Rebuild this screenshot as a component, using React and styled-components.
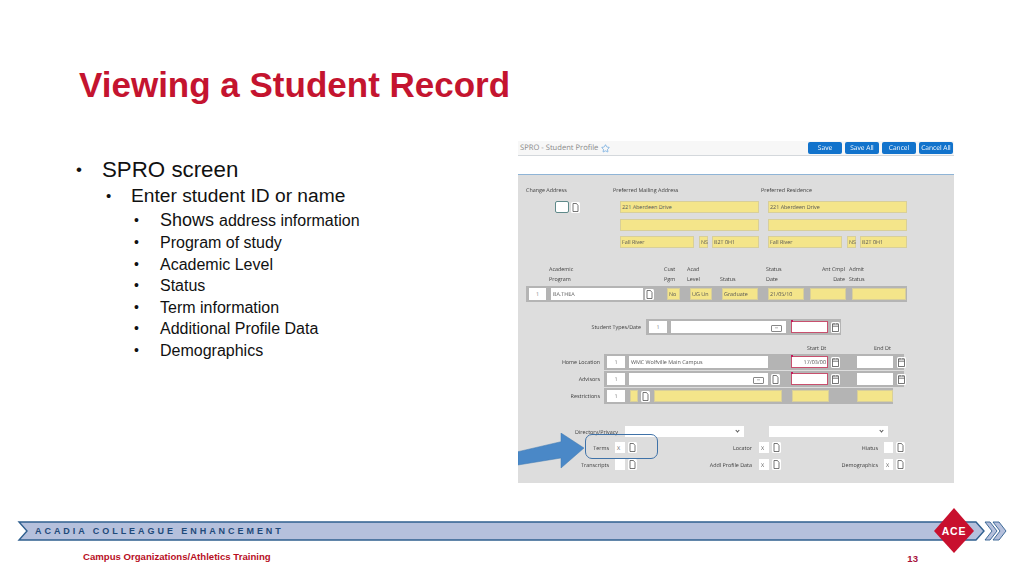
import styled, { createGlobalStyle } from 'styled-components';
import { Star } from 'lucide-react';

const BULLETS = [
  'Program of study',
  'Academic Level',
  'Status',
  'Term information',
  'Additional Profile Data',
  'Demographics',
];

export default function App() {
  return (
    <Slide>
      <GlobalStyle />
      <Title>Viewing a Student Record</Title>

      <Body>
        <BulletList>
          <BulletOne>SPRO screen</BulletOne>
          <BulletTwo>Enter student ID or name</BulletTwo>
          <BulletThree $first>
            Shows <Smaller>address information</Smaller>
          </BulletThree>
          {BULLETS.map((text) => (
            <BulletThree key={text}>{text}</BulletThree>
          ))}
        </BulletList>

        <Shot>
          <Blurred>
            <ShotHeader>
              <ShotTitle>
                SPRO - Student Profile
                <Star size={9} color="#3f8fd8" strokeWidth={1.5} />
              </ShotTitle>
              <ShotActions>
                <ShotBtn>Save</ShotBtn>
                <ShotBtn>Save All</ShotBtn>
                <ShotBtn>Cancel</ShotBtn>
                <ShotBtn>Cancel All</ShotBtn>
              </ShotActions>
            </ShotHeader>

            <Form>
              <LabelRow $pl={8} $h={8} $mt={11}>
                <Label $w={87}>Change Address</Label>
                <Label $w={148}>Preferred Mailing Address</Label>
                <Label>Preferred Residence</Label>
              </LabelRow>

              <Row $mt={7} $pl={37}>
                <CheckBox />
                <DocIcon $ml={2} />
                <Input $w={139} $ml={40} $fill="yellow">221 Aberdeen Drive</Input>
                <Input $w={139} $ml={9} $fill="yellow">221 Aberdeen Drive</Input>
              </Row>
              <Row $mt={6} $pl={102}>
                <Input $w={139} $fill="yellow" />
                <Input $w={139} $ml={9} $fill="yellow" />
              </Row>
              <Row $mt={5} $pl={102}>
                <Input $w={74} $fill="yellow">Fall River</Input>
                <Input $w={9} $ml={5} $fill="yellow">NS</Input>
                <Input $w={47} $ml={4} $fill="yellow">B2T 0H1</Input>
                <Input $w={74} $ml={9} $fill="yellow">Fall River</Input>
                <Input $w={9} $ml={5} $fill="yellow">NS</Input>
                <Input $w={47} $ml={4} $fill="yellow">B2T 0H1</Input>
              </Row>

              <LabelRow $mt={16} $pl={31} $h={20}>
                <StackLabel $w={115}>Academic<br />Program</StackLabel>
                <StackLabel $w={23}>Cust<br />Pgm</StackLabel>
                <StackLabel $w={33}>Acad<br />Level</StackLabel>
                <StackLabel $w={46}><br />Status</StackLabel>
                <StackLabel $w={44}>Status<br />Date</StackLabel>
                <StackLabel $w={35} $right>Ant Cmpl<br />Date</StackLabel>
                <StackLabel $w={30} $ml={4}>Admit<br />Status</StackLabel>
              </LabelRow>

              <Band $mt={2} $ml={8} $w={381}>
                <IndexBox $w={17}>1</IndexBox>
                <Input $w={92} $ml={5}>BA.THEA</Input>
                <DocIcon $ml={2} />
                <Input $w={13} $ml={13} $fill="yellow">No</Input>
                <Input $w={22} $ml={10} $fill="yellow">UG Un</Input>
                <Input $w={36} $ml={10} $fill="yellow">Graduate</Input>
                <Input $w={36} $ml={10} $fill="yellow">21/05/10</Input>
                <Input $w={36} $ml={6} $fill="yellow" />
                <Input $w={54} $ml={6} $fill="yellow" />
              </Band>

              <Row $mt={17}>
                <RowLabel $w={123}>Student Types/Date</RowLabel>
                <Band $ml={5} $w={195}>
                  <IndexBox $w={18}>1</IndexBox>
                  <Input $w={115} $ml={4}><Dots /></Input>
                  <Input $w={37} $ml={5} $fill="required" />
                  <CalIcon $ml={3} />
                </Band>
              </Row>

              <LabelRow $mt={9} $h={8} $pl={289}>
                <Label $w={67}>Start Dt</Label>
                <Label>End Dt</Label>
              </LabelRow>

              <Row $mt={2}>
                <RowLabel $w={82}>Home Location</RowLabel>
                <Band $ml={4} $w={300}>
                  <IndexBox $w={18}>1</IndexBox>
                  <Input $w={139} $ml={4}>WMC Wolfville Main Campus</Input>
                  <Input $w={37} $ml={23} $fill="required" $right>17/03/00</Input>
                  <CalIcon $ml={3} />
                  <Input $w={36} $ml={17} />
                  <CalIcon $ml={4} />
                </Band>
              </Row>
              <Row $mt={1}>
                <RowLabel $w={82}>Advisors</RowLabel>
                <Band $ml={4} $w={300}>
                  <IndexBox $w={18}>1</IndexBox>
                  <Input $w={139} $ml={4}><Dots /></Input>
                  <DocIcon $ml={3} />
                  <Input $w={37} $ml={11} $fill="required" />
                  <CalIcon $ml={3} />
                  <Input $w={36} $ml={17} />
                  <CalIcon $ml={4} />
                </Band>
              </Row>
              <Row $mt={1}>
                <RowLabel $w={82}>Restrictions</RowLabel>
                <Band $ml={4} $w={289}>
                  <IndexBox $w={18}>1</IndexBox>
                  <Input $w={8} $ml={5} $fill="yellow" />
                  <DocIcon $ml={3} />
                  <Input $w={128} $ml={4} $fill="yellow" />
                  <Input $w={37} $ml={10} $fill="yellow" />
                  <Input $w={36} $ml={28} $fill="yellow" />
                </Band>
              </Row>

              <Row $mt={22}>
                <RowLabel $w={100}>Directory/Privacy</RowLabel>
                <SelectBox $w={119} $ml={7} />
                <SelectBox $w={119} $ml={25} />
              </Row>

              <FlagRow $mt={5}>
                <FlagLabel $w={91}>Terms</FlagLabel>
                <Input $w={10} $ml={6} $h={11}>X</Input>
                <DocIcon $ml={3} />
                <FlagLabel $w={115}>Locator</FlagLabel>
                <Input $w={10} $ml={7} $h={11}>X</Input>
                <DocIcon $ml={3} />
                <FlagLabel $w={97}>Hiatus</FlagLabel>
                <Input $w={9} $ml={6} $h={11} />
                <DocIcon $ml={3} />
              </FlagRow>
              <FlagRow $mt={6}>
                <FlagLabel $w={91}>Transcripts</FlagLabel>
                <Input $w={10} $ml={6} $h={11} />
                <DocIcon $ml={3} />
                <FlagLabel $w={115}>Addl Profile Data</FlagLabel>
                <Input $w={10} $ml={7} $h={11}>X</Input>
                <DocIcon $ml={3} />
                <FlagLabel $w={97}>Demographics</FlagLabel>
                <Input $w={9} $ml={6} $h={11}>X</Input>
                <DocIcon $ml={3} />
              </FlagRow>
            </Form>

            <Highlight />
            <Arrow viewBox="0 0 70 36" aria-hidden="true">
              <path d="M0 18.7 L43 8.7 L43 0 L66 15 L43 35 L43 25 L0 32 Z" fill="#4a88c7" stroke="#3f78b0" strokeWidth="0.5" />
            </Arrow>
          </Blurred>
        </Shot>
      </Body>

      <Footer>
        <BannerArt viewBox="0 0 1024 60" aria-hidden="true">
          <path d="M19 26 L976 26 L984 35 L976 44 L19 44 L27 35 Z" fill="#b5c0dc" stroke="#2f5f8f" strokeWidth="1.4" />
          <path d="M985 26 H990 L997 35 L990 44 H985 L992 35 Z" fill="#b5c0dc" stroke="#2f5f8f" strokeWidth="0.9" />
          <path d="M993 26 H999 L1006 35 L999 44 H993 L1000 35 Z" fill="#b5c0dc" stroke="#2f5f8f" strokeWidth="0.9" />
          <path d="M954 12 L974 35 L954 57 L934 35 Z" fill="#c8102e" />
          <text x="954" y="39" textAnchor="middle" fontFamily="Liberation Sans, sans-serif" fontWeight="700" fontSize="10.5" letterSpacing="0.8" fill="#fff">ACE</text>
        </BannerArt>
        <BannerText>ACADIA COLLEAGUE ENHANCEMENT</BannerText>
        <FooterLine>
          <Course>Campus Organizations/Athletics Training</Course>
          <PageNo>13</PageNo>
        </FooterLine>
      </Footer>
    </Slide>
  );
}

function DocIcon({ $ml }) {
  return (
    <IconSvg $ml={$ml} viewBox="0 0 9 11" aria-hidden="true">
      <rect x="0" y="0" width="9" height="11" rx="1.5" fill="#fff" />
      <path d="M2 1.5 H5.5 L7 3.5 V9.5 H2 Z" fill="none" stroke="#555" strokeWidth="0.8" />
    </IconSvg>
  );
}

function CalIcon({ $ml }) {
  return (
    <IconSvg $ml={$ml} viewBox="0 0 9 11" aria-hidden="true">
      <rect x="0" y="0" width="9" height="11" rx="1.5" fill="#fff" />
      <rect x="1.5" y="2" width="6" height="7.5" fill="none" stroke="#555" strokeWidth="0.8" />
      <path d="M1.5 4.2 H7.5 M3 1 V2.5 M6 1 V2.5" stroke="#555" strokeWidth="0.8" />
    </IconSvg>
  );
}

function Dots() {
  return <DotsBox>•••</DotsBox>;
}

/* ── Styled Components ── */

const GlobalStyle = createGlobalStyle`
  html, body {
    margin: 0;
    padding: 0;
    background: #fff;
    font-family: 'Liberation Sans', Arial, sans-serif;
  }
`;

const Slide = styled.div`
  width: 1024px;
  height: 576px;
  overflow: hidden;
  display: flex;
  flex-direction: column;
  background: #fff;
`;

const Title = styled.h1`
  margin: 64px 0 0 79px;
  font-size: 35px;
  line-height: 41px;
  font-weight: 700;
  color: #c4142f;
`;

const Body = styled.div`
  display: flex;
  justify-content: space-between;
  height: 343px;
  margin-top: 36px;
  padding-right: 70px;
`;

const BulletList = styled.ul`
  list-style: none;
  margin: 16px 0 0;
  padding: 0;
  color: #111;
`;

const Item = styled.li`
  position: relative;
  &::before {
    content: '•';
    position: absolute;
    font-size: 15px;
  }
`;

const BulletOne = styled(Item)`
  margin-left: 102px;
  font-size: 22.3px;
  line-height: 26px;
  &::before { left: -26px; font-size: 17px; }
`;

const BulletTwo = styled(Item)`
  margin-left: 131px;
  font-size: 19.2px;
  line-height: 25.5px;
  &::before { left: -25px; }
`;

const BulletThree = styled(Item)`
  margin-left: 160px;
  font-size: ${({ $first }) => ($first ? '18px' : '16px')};
  line-height: ${({ $first }) => ($first ? '23.5px' : '21.5px')};
  &::before { left: -26px; font-size: 14px; }
`;

const Smaller = styled.span`
  font-size: 16px;
`;

const Shot = styled.div`
  width: 436px;
  height: 342px;
  overflow: hidden;
  position: relative;
`;

const Blurred = styled.div`
  width: 100%;
  height: 100%;
  position: relative;
  display: flex;
  flex-direction: column;
  filter: blur(0.45px);
  font-family: 'Open Sans', sans-serif;
  text-rendering: geometricPrecision;
`;

const ShotHeader = styled.div`
  box-sizing: border-box;
  height: 15px;
  flex-shrink: 0;
  display: flex;
  align-items: flex-start;
  justify-content: space-between;
  background: #f7f7f7;
  border-bottom: 1px solid #d4d8dc;
  padding: 1px 1px 0 2px;
`;

const ShotTitle = styled.div`
  display: flex;
  align-items: center;
  gap: 3px;
  height: 12px;
  font-size: 7.6px;
  color: #8a8a8a;
`;

const ShotActions = styled.div`
  display: flex;
  gap: 3px;
`;

const ShotBtn = styled.div`
  width: 34px;
  height: 12px;
  border-radius: 2px;
  background: #1273cc;
  color: #fff;
  font-size: 6.6px;
  line-height: 12px;
  text-align: center;
  white-space: nowrap;
`;

const Form = styled.div`
  flex: 1;
  margin-top: 18px;
  background: #dddddd;
  border-top: 1px solid #8fb4d6;
  color: #3c3c3c;
  font-size: 5.4px;
`;

const LabelRow = styled.div`
  display: flex;
  align-items: flex-end;
  height: ${({ $h }) => $h}px;
  margin-top: ${({ $mt }) => $mt || 0}px;
  padding-left: ${({ $pl }) => $pl || 0}px;
`;

const Label = styled.div`
  flex: none;
  width: ${({ $w }) => ($w ? `${$w}px` : 'auto')};
  line-height: 8px;
  white-space: nowrap;
`;

const StackLabel = styled.div`
  flex: none;
  width: ${({ $w }) => $w}px;
  margin-left: ${({ $ml }) => $ml || 0}px;
  text-align: ${({ $right }) => ($right ? 'right' : 'left')};
  line-height: 10px;
  white-space: nowrap;
`;

const Row = styled.div`
  display: flex;
  align-items: center;
  margin-top: ${({ $mt }) => $mt || 0}px;
  padding-left: ${({ $pl }) => $pl || 0}px;
`;

const FlagRow = styled(Row)`
  height: 11px;
`;

const RowLabel = styled.div`
  flex: none;
  width: ${({ $w }) => $w}px;
  text-align: right;
  white-space: nowrap;
`;

const FlagLabel = styled.div`
  flex: none;
  width: ${({ $w }) => $w}px;
  text-align: right;
  white-space: nowrap;
`;

const Band = styled.div`
  flex: none;
  display: flex;
  align-items: center;
  box-sizing: border-box;
  width: ${({ $w }) => $w}px;
  height: 16px;
  margin-top: ${({ $mt }) => $mt || 0}px;
  margin-left: ${({ $ml }) => $ml || 0}px;
  padding-left: 3px;
  background: #b4b4b4;
`;

const FILLS = {
  white: { bg: '#ffffff', line: 'transparent' },
  yellow: { bg: '#f4e58a', line: '#d8cf9a' },
  required: { bg: '#ffffff', line: '#c8506e' },
};

const Input = styled.div`
  flex: none;
  box-sizing: border-box;
  position: relative;
  display: flex;
  align-items: center;
  justify-content: ${({ $right }) => ($right ? 'flex-end' : 'flex-start')};
  width: ${({ $w }) => $w}px;
  height: ${({ $h }) => $h || 12}px;
  margin-left: ${({ $ml }) => $ml || 0}px;
  padding: 0 1px;
  white-space: nowrap;
  background: ${({ $fill }) => FILLS[$fill || 'white'].bg};
  border: 1px solid ${({ $fill }) => FILLS[$fill || 'white'].line};
  font-size: 5.4px;
  color: #555;
  &::before {
    content: '';
    display: ${({ $fill }) => ($fill === 'required' ? 'block' : 'none')};
    position: absolute;
    left: -1px;
    top: -2px;
    width: 2px;
    height: 2px;
    background: #c2185b;
  }
`;

const IndexBox = styled(Input)`
  justify-content: center;
  color: #777;
`;

const CheckBox = styled.div`
  flex: none;
  box-sizing: border-box;
  width: 14px;
  height: 12px;
  background: #fff;
  border: 1px solid #5f8a8a;
  border-radius: 2px;
`;

const SelectBox = styled.div`
  flex: none;
  box-sizing: border-box;
  width: ${({ $w }) => $w}px;
  height: 11px;
  margin-left: ${({ $ml }) => $ml}px;
  background: #fff;
  position: relative;
  &::after {
    content: '';
    position: absolute;
    right: 5px;
    top: 3px;
    width: 2px;
    height: 2px;
    border-right: 1px solid #555;
    border-bottom: 1px solid #555;
    transform: rotate(45deg);
  }
`;

const IconSvg = styled.svg`
  flex: none;
  width: 9px;
  height: 11px;
  margin-left: ${({ $ml }) => $ml || 0}px;
`;

const DotsBox = styled.span`
  position: absolute;
  right: 3px;
  top: 3px;
  width: 9px;
  height: 5px;
  border: 0.5px solid #888;
  border-radius: 1px;
  font-size: 3px;
  line-height: 5px;
  text-align: center;
  color: #333;
`;

const Highlight = styled.div`
  position: absolute;
  left: 67px;
  top: 293px;
  width: 73px;
  height: 25px;
  box-sizing: border-box;
  border: 1px solid #3f72a8;
  border-radius: 7px;
`;

const Arrow = styled.svg`
  position: absolute;
  left: 0;
  top: 292px;
  width: 70px;
  height: 36px;
`;

const Footer = styled.div`
  position: relative;
  flex: 1;
  padding-top: 41px;
`;

const BannerArt = styled.svg`
  position: absolute;
  left: 0;
  top: 12px;
  width: 1024px;
  height: 60px;
`;

const BannerText = styled.div`
  position: relative;
  margin-left: 35px;
  height: 12px;
  font-size: 9px;
  line-height: 12px;
  font-weight: 700;
  letter-spacing: 2.95px;
  color: #1f4a7a;
  white-space: nowrap;
`;

const FooterLine = styled.div`
  position: relative;
  display: flex;
  justify-content: space-between;
  margin-top: 14px;
  padding: 0 106px 0 83px;
  font-weight: 700;
  font-size: 9.6px;
`;

const Course = styled.div`
  color: #b8101f;
`;

const PageNo = styled.div`
  color: #a8123a;
  margin-top: 2px;
`;
